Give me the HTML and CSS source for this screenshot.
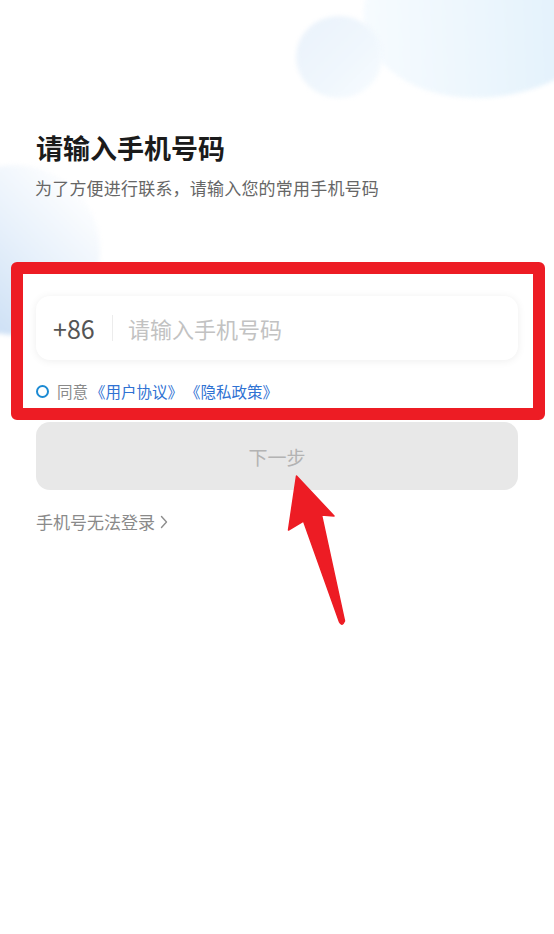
FILE: index.html
```html
<!DOCTYPE html>
<html lang="zh-CN">

<head>
    <meta charset="UTF-8">
    <title>请输入手机号码</title>
    <link rel="stylesheet" href="styles.css">
</head>

<body>
    <div class="page">
        <!-- 背景装饰 -->
        <div class="blob blob-big"></div>
        <div class="blob blob-round"></div>
        <div class="blob blob-left"></div>

        <div class="content">
            <h1 class="title">请输入手机号码</h1>
            <p class="subtitle">为了方便进行联系，请输入您的常用手机号码</p>

            <div class="highlight">
                <div class="phone-card">
                    <span class="area-code">+86</span>
                    <span class="divider"></span>
                    <span class="placeholder">请输入手机号码</span>
                </div>
                <div class="agree">
                    <span class="check"></span>
                    <span class="agree-text">同意</span>
                    <a class="link">《用户协议》</a>
                    <a class="link">《隐私政策》</a>
                </div>
            </div>

            <div class="next-btn">下一步</div>

            <div class="trouble">手机号无法登录<svg class="chev" width="8" height="14" viewBox="0 0 8 14"><path d="M1.5 1.5 L6.5 7 L1.5 12.5" fill="none" stroke="#8d8d8d" stroke-width="1.4" stroke-linecap="round" stroke-linejoin="round"/></svg></div>
        </div>

        <!-- 标注箭头 -->
        <svg class="arrow" width="554" height="934" viewBox="0 0 554 934">
            <path d="M296.5 476 L334 516 L321.5 515 L344.5 621 Q342 627 339.5 622 L303.5 521 L288.5 530 Z" fill="#ed1c24" stroke="#ed1c24" stroke-width="1.5" stroke-linejoin="round"/>
        </svg>
    </div>
</body>

</html>
```

FILE: styles.css
```css
* {
    box-sizing: border-box;
}

body {
    margin: 0;
    background: #fff;
    font-family: "Noto Sans CJK SC", "Noto Sans", sans-serif;
    text-spacing-trim: space-all;
}

.page {
    position: relative;
    width: 554px;
    height: 934px;
    overflow: hidden;
    background: #fff;
}

.blob {
    position: absolute;
    border-radius: 50%;
    filter: blur(2px);
}

.blob-big {
    left: 362px;
    top: -92px;
    width: 265px;
    height: 188px;
    transform: rotate(-12deg);
    background: linear-gradient(100deg, #f8fcff 0%, #ecf6fd 45%, #dbedfb 100%);
}

.blob-round {
    left: 296px;
    top: 16px;
    width: 86px;
    height: 82px;
    background: linear-gradient(135deg, #eaf2fb 0%, #f0f7fd 60%, #f8fcff 100%);
}

.blob-left {
    left: -70px;
    top: 165px;
    width: 170px;
    height: 170px;
    background: linear-gradient(225deg, #ffffff 10%, #e8f1fb 45%, #bfd7f2 100%);
}

.content {
    position: relative;
    padding-top: 131px;
}

.title {
    margin: 0 36px;
    font-size: 27px;
    line-height: 34px;
    font-weight: 700;
    color: #1b1b1b;
}

.subtitle {
    margin: 11px 35px 0;
    font-size: 17px;
    letter-spacing: .2px;
    line-height: 24px;
    color: #666;
}

.highlight {
    margin: 62px 9px 0 11px;
    padding: 22px 15px 7px 13px;
    border: 12px solid #ed1c24;
    border-radius: 6px;
    background: #fff;
}

.phone-card {
    display: flex;
    align-items: center;
    height: 64px;
    padding-left: 17px;
    border-radius: 14px;
    background: #fff;
    box-shadow: 0 1px 8px rgba(0, 0, 0, .07);
}

.area-code {
    width: 59px;
    font-size: 25px;
    color: #555;
}

.divider {
    width: 1px;
    height: 26px;
    margin-right: 15px;
    background: #ececec;
}

.placeholder {
    font-size: 22px;
    color: #c2c2c2;
}

.agree {
    display: flex;
    align-items: center;
    gap: 2px;
    height: 20px;
    margin-top: 21px;
    font-size: 15.5px;
}

.check {
    width: 13px;
    height: 13px;
    margin-right: 6px;
    border: 2px solid #1b8ad3;
    border-radius: 50%;
}

.agree-text {
    color: #8a8a8a;
}

.link {
    color: #2f72d3;
}

.next-btn {
    display: flex;
    align-items: center;
    justify-content: center;
    height: 68px;
    margin: 2px 36px 0;
    border-radius: 14px;
    background: #e8e8e8;
    font-size: 19px;
    color: #b3b3b3;
}

.trouble {
    display: flex;
    align-items: center;
    margin: 20px 36px 0;
    font-size: 17px;
    line-height: 24px;
    color: #8a8a8a;
}

.chev {
    margin-left: 5px;
}

.arrow {
    position: absolute;
    left: 0;
    top: 0;
    pointer-events: none;
}
```
